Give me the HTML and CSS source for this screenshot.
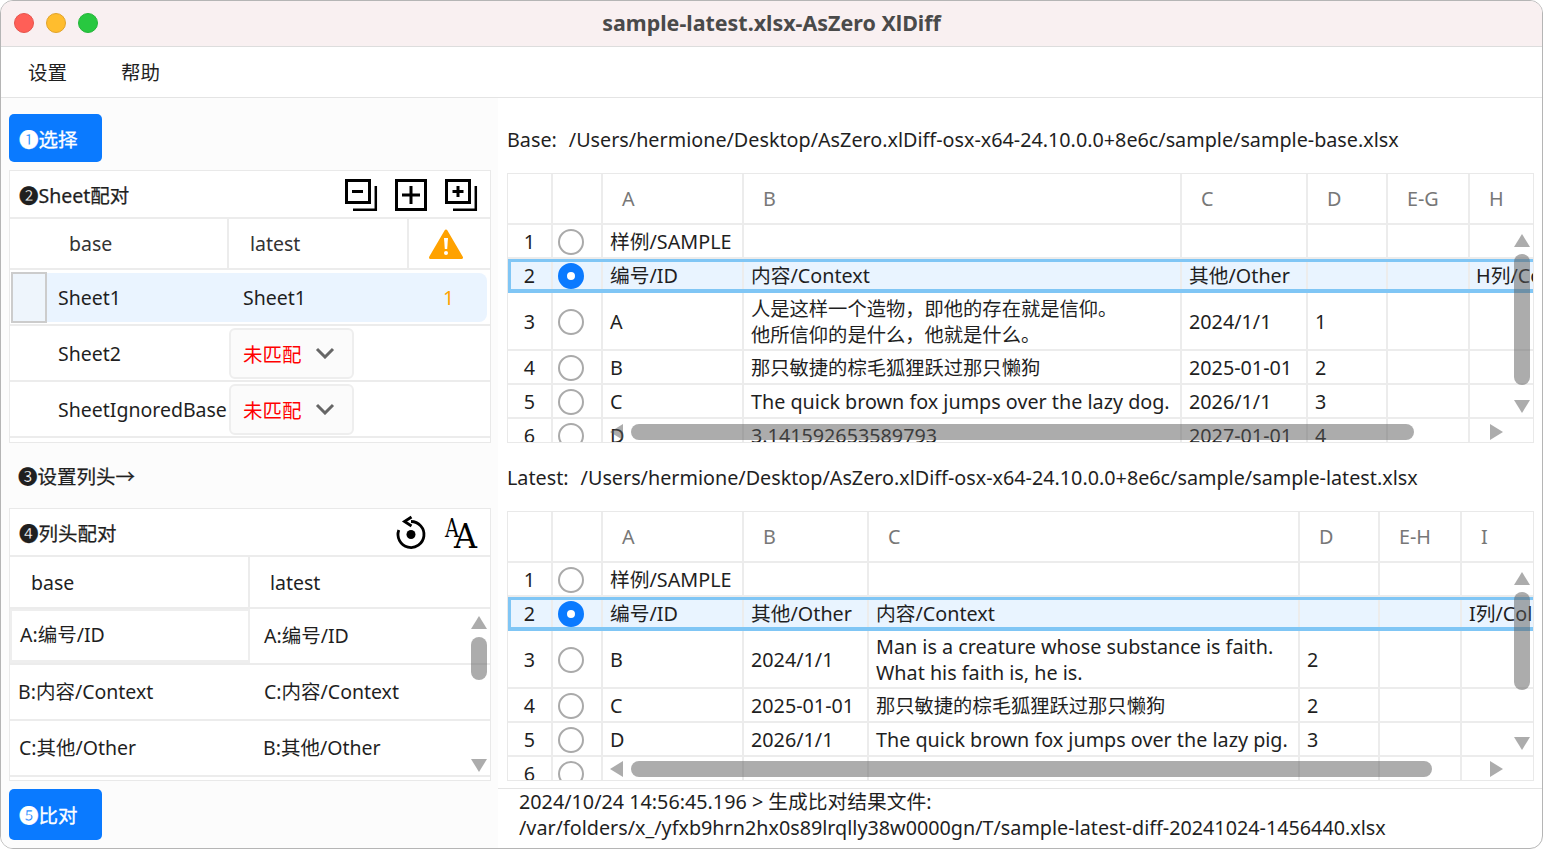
FILE: index.html
```html
<!DOCTYPE html>
<html lang="zh">
<head>
<meta charset="utf-8">
<title>sample-latest.xlsx-AsZero XlDiff</title>
<link rel="stylesheet" href="styles.css">
</head>
<body>
<div class="window">
  <header class="titlebar">
    <div class="lights"><i class="light red"></i><i class="light yellow"></i><i class="light green"></i></div>
    <div class="title">sample-latest.xlsx-AsZero XlDiff</div>
  </header>
  <nav class="menu"><span>设置</span><span>帮助</span></nav>
  <div class="main">
    <aside class="left">
      <button class="btn">❶选择</button>
      <section class="panel panel-sheet">
        <div class="phead">
          <span>❷Sheet配对</span>
          <div class="tools">
            <svg class="ic" viewBox="0 0 32 32"><path d="M1.500 1.500h23v22h-23z" fill="none" stroke="#000" stroke-width="3"/><path d="M7 12.500h11" stroke="#000" stroke-width="3"/><path d="M8 30.800h22.800V7" fill="none" stroke="#000" stroke-width="2.500"/></svg>
            <svg class="ic" viewBox="0 0 32 32"><path d="M1.500 1.500h29v29h-29z" fill="none" stroke="#000" stroke-width="3"/><path d="M7 16h18M16 7v18" stroke="#000" stroke-width="3"/></svg>
            <svg class="ic" viewBox="0 0 32 32"><path d="M1.500 1.500h23v22h-23z" fill="none" stroke="#000" stroke-width="3"/><path d="M7.500 12.500h11M13 7v11" stroke="#000" stroke-width="3"/><path d="M8 30.800h22.800V7" fill="none" stroke="#000" stroke-width="2.500"/></svg>
          </div>
        </div>
        <div class="srow shead">
          <div class="c base-h">base</div><div class="c latest-h">latest</div>
          <div class="c warn"><svg width="34" height="30" viewBox="0 0 34 30"><path d="M17 2 L32.500 28.500 H1.500Z" fill="#ffa200" stroke="#ffa200" stroke-width="3" stroke-linejoin="round"/><path d="M15 9h4l-.8 11h-2.400z" fill="#fff"/><circle cx="17" cy="24" r="2" fill="#fff"/></svg></div>
        </div>
        <div class="srow sel">
          <div class="focus"></div><div class="stext">Sheet1</div><div class="stext">Sheet1</div><div class="num">1</div>
        </div>
        <div class="srow">
          <div class="spacer"></div><div class="stext">Sheet2</div>
          <div class="select"><span>未匹配</span><svg width="20" height="12" viewBox="0 0 20 12"><path d="M2 2l8 8 8-8" fill="none" stroke="#666" stroke-width="3"/></svg></div>
        </div>
        <div class="srow">
          <div class="spacer"></div><div class="stext">SheetIgnoredBase</div>
          <div class="select"><span>未匹配</span><svg width="20" height="12" viewBox="0 0 20 12"><path d="M2 2l8 8 8-8" fill="none" stroke="#666" stroke-width="3"/></svg></div>
        </div>
      </section>
      <div class="step3">❸设置列头→</div>
      <section class="panel panel-col">
        <div class="phead">
          <span>❹列头配对</span>
          <div class="tools">
            <svg class="ic" viewBox="0 0 32 32"><path d="M16 4.500A13 13 0 1 1 3.800 13" fill="none" stroke="#000" stroke-width="2.800"/><path d="M16.500 0 L9.500 4.500 L16.500 9" fill="none" stroke="#000" stroke-width="2.800"/><circle cx="16" cy="17.500" r="4.500"/></svg>
            <svg class="ic" viewBox="0 0 32 32"><text x="0" y="20" class="aa1" textLength="14" lengthAdjust="spacingAndGlyphs">A</text><text x="9" y="31" class="aa2" textLength="23" lengthAdjust="spacingAndGlyphs">A</text></svg>
          </div>
        </div>
        <div class="crow chead"><div class="c ch1">base</div><div class="c ch2">latest</div></div>
        <div class="crow csel"><div class="c cfocus">A:编号/ID</div><div class="c ct2">A:编号/ID</div></div>
        <div class="crow"><div class="c ct1 nudge">B:内容/Context</div><div class="c ct2">C:内容/Context</div></div>
        <div class="crow"><div class="c ct1">C:其他/Other</div><div class="c ct2 nudge">B:其他/Other</div></div>
        <i class="arrow up cup"></i><i class="bar cbar"></i><i class="arrow down cdown"></i>
      </section>
      <button class="btn btn5">❺比对</button>
    </aside>
    <section class="right">
      <div class="pathline"><span class="plabel">Base:</span><span>/Users/hermione/Desktop/AsZero.xlDiff-osx-x64-24.10.0.0+8e6c/sample/sample-base.xlsx</span></div>
      <div class="table t1">
        <div class="tr th"><div></div><div></div><div>A</div><div>B</div><div>C</div><div>D</div><div>E-G</div><div>H</div></div>
        <div class="tr r34"><div class="n">1</div><div class="rc"><i class="radio"></i></div><div>样例/SAMPLE</div><div></div><div></div><div></div><div></div><div></div></div>
        <div class="tr r34 hl"><div class="n">2</div><div class="rc"><i class="radio on"></i></div><div>编号/ID</div><div>内容/Context</div><div>其他/Other</div><div></div><div></div><div>H列/Col</div></div>
        <div class="tr r58"><div class="n">3</div><div class="rc"><i class="radio"></i></div><div>A</div><div class="zh">人是这样一个造物，即他的存在就是信仰。<br>他所信仰的是什么，他就是什么。</div><div>2024/1/1</div><div>1</div><div></div><div></div></div>
        <div class="tr r34"><div class="n">4</div><div class="rc"><i class="radio"></i></div><div>B</div><div class="zh">那只敏捷的棕毛狐狸跃过那只懒狗</div><div>2025-01-01</div><div>2</div><div></div><div></div></div>
        <div class="tr r34"><div class="n">5</div><div class="rc"><i class="radio"></i></div><div>C</div><div>The quick brown fox jumps over the lazy dog.</div><div>2026/1/1</div><div>3</div><div></div><div></div></div>
        <div class="tr r34"><div class="n">6</div><div class="rc"><i class="radio"></i></div><div>D</div><div>3.141592653589793</div><div>2027-01-01</div><div>4</div><div></div><div></div></div>
        <i class="arrow up"></i><i class="bar vbar"></i><i class="arrow down"></i>
        <i class="arrow left"></i><i class="bar hbar"></i><i class="arrow rightw"></i>
      </div>
      <div class="pathline second"><span class="plabel">Latest:</span><span>/Users/hermione/Desktop/AsZero.xlDiff-osx-x64-24.10.0.0+8e6c/sample/sample-latest.xlsx</span></div>
      <div class="table t2">
        <div class="tr th"><div></div><div></div><div>A</div><div>B</div><div>C</div><div>D</div><div>E-H</div><div>I</div></div>
        <div class="tr r34"><div class="n">1</div><div class="rc"><i class="radio"></i></div><div>样例/SAMPLE</div><div></div><div></div><div></div><div></div><div></div></div>
        <div class="tr r34 hl"><div class="n">2</div><div class="rc"><i class="radio on"></i></div><div>编号/ID</div><div>其他/Other</div><div>内容/Context</div><div></div><div></div><div>I列/Col</div></div>
        <div class="tr r58"><div class="n">3</div><div class="rc"><i class="radio"></i></div><div>B</div><div>2024/1/1</div><div>Man is a creature whose substance is faith.<br>What his faith is, he is.</div><div>2</div><div></div><div></div></div>
        <div class="tr r34"><div class="n">4</div><div class="rc"><i class="radio"></i></div><div>C</div><div>2025-01-01</div><div class="zh">那只敏捷的棕毛狐狸跃过那只懒狗</div><div>2</div><div></div><div></div></div>
        <div class="tr r34"><div class="n">5</div><div class="rc"><i class="radio"></i></div><div>D</div><div>2026/1/1</div><div>The quick brown fox jumps over the lazy pig.</div><div>3</div><div></div><div></div></div>
        <div class="tr r34"><div class="n">6</div><div class="rc"><i class="radio"></i></div><div></div><div></div><div></div><div></div><div></div><div></div></div>
        <i class="arrow up"></i><i class="bar vbar"></i><i class="arrow down"></i>
        <i class="arrow left"></i><i class="bar hbar"></i><i class="arrow rightw"></i>
      </div>
      <div class="log">2024/10/24 14:56:45.196 &gt; 生成比对结果文件:<br>/var/folders/x_/yfxb9hrn2hx0s89lrqlly38w0000gn/T/sample-latest-diff-20241024-1456440.xlsx</div>
    </section>
  </div>
</div>
</body>
</html>
```
FILE: styles.css
```css
* { box-sizing: border-box; }
html, body { margin: 0; height: 100%; background: #fff; overflow: hidden; }
body { font-family: "Noto Sans", "Noto Sans CJK SC", sans-serif; font-size: 19.5px; color: #1f1f1f; }
i { display: block; }

.window { width: 1543px; height: 849px; border: 1px solid #b5b5b5; border-radius: 13px; overflow: hidden; display: flex; flex-direction: column; background: #fff; }
.titlebar { height: 46px; flex: none; background: #f9f0f1; border-bottom: 1px solid #ddd; display: flex; align-items: center; position: relative; padding-bottom: 2px; }
.lights { display: flex; gap: 12px; padding-left: 12.500px; }
.light { width: 20px; height: 20px; border-radius: 50%; }
.red { background: #ff5f57; border: 1px solid #e5534c; }
.yellow { background: #ffbd2e; border: 1px solid #e0a32a; }
.green { background: #28c840; border: 1px solid #25b53a; }
.title { position: absolute; left: 0; right: 0; text-align: center; font-weight: 700; font-size: 21.450px; color: #4a4a4a; }

.menu { height: 51px; flex: none; border-bottom: 1px solid #e4e4e4; display: flex; align-items: center; gap: 54px; padding: 0 0 2px 27px; background: #fff; }

.main { flex: 1; display: grid; grid-template-columns: 497px 1fr; min-height: 0; }
.left { background: #fcfcfc; padding: 16px 0 0 8px; display: flex; flex-direction: column; position: relative; }
.btn { width: 93px; height: 48px; background: #0a7aff; color: #fff; border: 0; border-radius: 5px; font: inherit; text-align: left; padding: 0 0 0 10px; flex: none; -webkit-text-stroke: .3px #fff; }
.btn5 { height: 51px; margin-top: 8px; }

.panel { width: 482px; border: 1px solid #e9e9e9; background: #fff; flex: none; position: relative; }
.panel-sheet { margin-top: 8px; height: 273px; }
.panel-col { height: 273px; }
.phead { height: 48px; display: flex; align-items: center; justify-content: space-between; border-bottom: 2px solid #ececec; padding: 0 13px 0 9px; -webkit-text-stroke: .25px #1f1f1f; }
.tools { display: flex; gap: 18px; padding-top: 2px; }
.ic { width: 32px; height: 32px; display: block; overflow: visible; }
.aa1 { font: 400 26px "DejaVu Serif", serif; }
.aa2 { font: 400 34px "DejaVu Serif", serif; }

.step3 { height: 65px; flex: none; display: flex; align-items: center; padding-left: 9px; -webkit-text-stroke: .25px #1f1f1f; }

.srow { height: 56px; border-bottom: 2px solid #ececec; display: grid; grid-template-columns: 38px 185px 180px 1fr; align-items: center; position: relative; }
.shead { height: 51px; grid-template-columns: 219px 180px 1fr; color: #333; }
.shead .c { height: 100%; display: flex; align-items: center; border-right: 2px solid #ececec; }
.shead .warn { border-right: 0; justify-content: center; padding-right: 8px; }
.base-h { padding-left: 59px; }
.latest-h { padding-left: 21px; }
.sel::before { content: ""; position: absolute; top: 3px; bottom: 2px; left: 37px; right: 3px; background: #eaf4ff; border-radius: 0 8px 8px 0; }
.sel > div { position: relative; }
.focus { width: 36px; height: 51px; margin-left: 1px; background: #eef5fc; border: 2px solid #ccc; }
.stext { padding-left: 10px; }
.num { color: #ffa200; padding-left: 30px; }
.select { width: 125px; height: 51px; margin-left: -4px; border: 2px solid #eee; border-radius: 6px; background: #fbfbfb; display: flex; align-items: center; justify-content: space-between; padding: 0 17px 0 12px; color: #f00; }

.crow { height: 56px; border-bottom: 2px solid #ececec; display: grid; grid-template-columns: 240px 1fr; align-items: center; padding-bottom: 4px; }
.chead { height: 52px; padding-bottom: 0; }
.chead .c { height: 100%; display: flex; align-items: center; }
.ch1 { padding-left: 21px; border-right: 2px solid #ececec; }
.ch2 { padding-left: 20px; }
.csel { padding-bottom: 0; }
.csel .cfocus { height: 100%; display: flex; align-items: center; padding: 0 0 4px 8px; border: 2px solid #eee; border-bottom-width: 3px; }
.csel .ct2 { padding-bottom: 4px; }
.ct1 { padding-left: 9px; }
.ct2 { padding-left: 14px; }
.nudge { transform: translateX(-1px); }

.arrow { position: absolute; width: 0; height: 0; }
.up { border: 8px solid transparent; border-top: 0; border-bottom: 13px solid rgba(90, 90, 90, .5); }
.down { border: 8px solid transparent; border-bottom: 0; border-top: 13px solid rgba(90, 90, 90, .5); }
i.left { border: 8px solid transparent; border-left: 0; border-right: 13px solid rgba(90, 90, 90, .5); background: none; padding: 0; }
.rightw { border: 8px solid transparent; border-right: 0; border-left: 13px solid rgba(90, 90, 90, .5); }
.bar { position: absolute; background: rgba(90, 90, 90, .5); border-radius: 8px; }
.cup { left: 461px; top: 107px; }
.cbar { left: 461px; width: 16px; top: 128px; height: 43px; }
.cdown { left: 461px; top: 250px; }

.right { padding: 28px 9px 0 9px; display: flex; flex-direction: column; min-width: 0; font-size: 19.750px; }
.pathline { height: 47px; flex: none; display: flex; align-items: flex-start; gap: 12px; white-space: nowrap; }
.pathline.second { height: 68px; padding-top: 21px; }
.plabel { flex: none; }
.table { width: 1027px; height: 270px; flex: none; border: 1px solid #e9e9e9; overflow: hidden; position: relative; }
.tr { display: grid; white-space: nowrap; position: relative; border-bottom: 2px solid #ececec; }
.t1 .tr { grid-template-columns: 45px 50px 141px 438px 126px 80px 82px 1fr; }
.t2 .tr { grid-template-columns: 45px 50px 141px 125px 431px 80px 82px 1fr; }
.tr > div { display: flex; align-items: center; padding: 2px 0 0 7px; border-right: 2px solid #ececec; line-height: 26px; min-width: 0; }
.tr > div:last-child { border-right: 0; }
.tr > .zh { font-size: 19.300px; }
.th { height: 51px; color: #777; }
.tr.th > div { padding: 0 0 0 19px; }
.r34 { height: 34px; }
.r58 { height: 58px; }
.hl { background: #e9f4ff; }
.hl::after { content: ""; position: absolute; inset: 0 0 -2px 0; border: 3px solid #80c6f5; border-bottom-width: 4px; border-right: 0; pointer-events: none; }
.t1 .hl > div:last-child { padding-left: 6px; }
.tr > .n { padding-left: 0; justify-content: center; }
.tr > .rc { padding-left: 5px; }
.radio { width: 26px; height: 26px; border-radius: 50%; border: 2px solid #aaa; background: #fff; flex: none; }
.radio.on { border: 9px solid #0a7aff; background: #fff; }
.table .up { left: 1006px; top: 60px; }
.table .down { left: 1006px; top: 226px; }
.t2 .down { top: 225px; }
.table .vbar { left: 1006px; width: 16px; }
.t1 .vbar { top: 80px; height: 131px; }
.t2 .vbar { top: 80px; height: 98px; }
.table i.left { left: 102px; top: 250px; }
.table .hbar { top: 250px; height: 16px; left: 123px; }
.t1 .hbar { width: 783px; }
.t2 .hbar { top: 249px; width: 801px; }
.table .rightw { left: 982px; top: 250px; }
.t2 i.left, .t2 .rightw { top: 249px; }

.log { margin: 7px -9px 0 -9px; padding: 0 0 0 21px; border-top: 1px solid #e4e4e4; line-height: 26px; white-space: nowrap; }
```
